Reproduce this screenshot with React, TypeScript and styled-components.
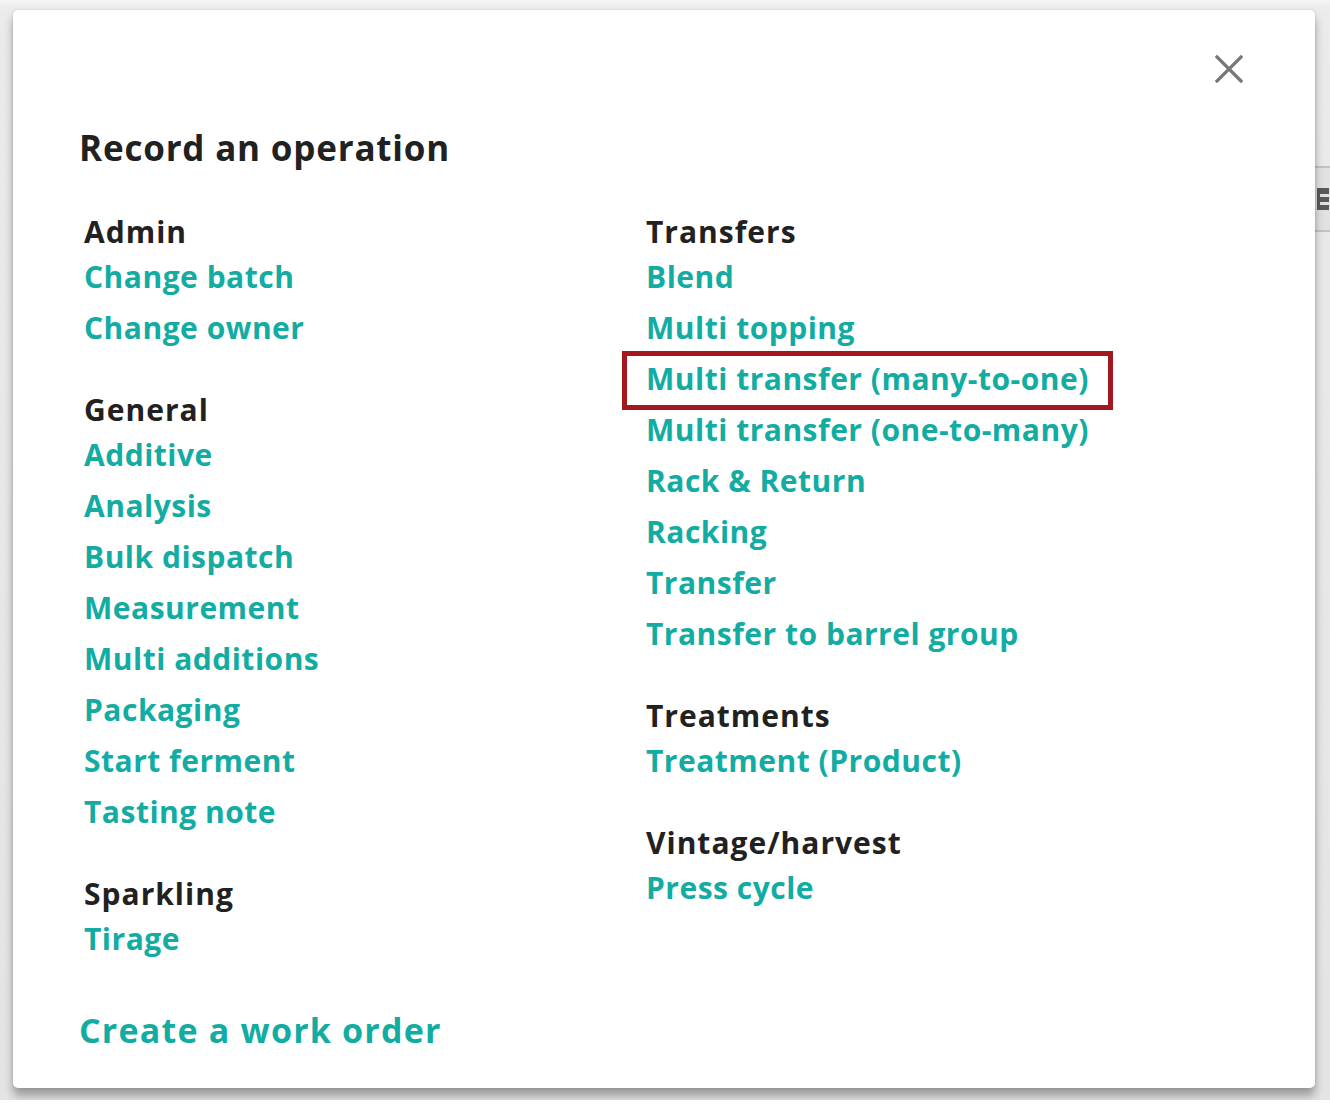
import React from 'react';
import styled, { createGlobalStyle } from 'styled-components';

const GlobalStyle = createGlobalStyle`
  html, body {
    margin: 0;
    padding: 0;
    background: #ffffff;
  }
  body {
    font-family: "Open Sans", "Noto Sans", "Liberation Sans", sans-serif;
  }
`;

const Backdrop = styled.div`
  display: flex;
  align-items: flex-start;
  height: 1100px;
  background: linear-gradient(#f5f5f5 0, #ebebeb 10px, #e4e4e4 100%);
  padding: 10px 0 0 13px;
  box-sizing: border-box;
`;

const Modal = styled.div`
  position: relative;
  flex: 0 0 1302px;
  height: 1078px;
  box-sizing: border-box;
  background: #ffffff;
  border-radius: 5px;
  box-shadow: 0 8px 10px rgba(0, 0, 0, 0.32), 0 0 3px rgba(0, 0, 0, 0.12);
  padding: 39px 66px 0 66px;
  display: flex;
  flex-direction: column;
`;

const SideStrip = styled.div`
  flex: 1;
  height: 100%;
  display: flex;
  flex-direction: column;
  padding-top: 156px;
  box-sizing: border-box;
`;

const SideTab = styled.div`
  height: 62px;
  border-top: 2px solid #c4c4c4;
  border-bottom: 2px solid #c4c4c4;
  background: #e2e2e2;
  display: flex;
  align-items: center;
  padding-left: 2px;
  overflow: hidden;
`;

const Header = styled.div`
  display: flex;
  justify-content: flex-end;
`;

const CloseButton = styled.button`
  width: 40px;
  height: 40px;
  border: none;
  background: transparent;
  padding: 0;
  display: flex;
  align-items: center;
  justify-content: center;
  cursor: pointer;
`;

const Title = styled.h1`
  margin: 37px 0 0 0;
  font-size: 35px;
  line-height: 44px;
  font-weight: 700;
  color: #212121;
  letter-spacing: 0.8px;
`;

const Columns = styled.div`
  display: grid;
  grid-template-columns: 562px 1fr;
  margin-top: 42px;
  padding-left: 5px;
`;

const Column = styled.div`
  display: flex;
  flex-direction: column;
  gap: 37px;
`;

const Section = styled.div`
  display: flex;
  flex-direction: column;
  align-items: flex-start;
`;

const SectionTitle = styled.div`
  font-size: 30px;
  line-height: 39px;
  font-weight: 700;
  color: #212121;
  letter-spacing: 1px;
`;

const OpLink = styled.a<{ $highlight?: boolean }>`
  position: relative;
  display: block;
  font-size: 30px;
  line-height: 51px;
  font-weight: 700;
  color: #12aca3;
  text-decoration: none;
  letter-spacing: 0.5px;
  cursor: pointer;
  ${p =>
    p.$highlight &&
    `
    &::after {
      content: '';
      position: absolute;
      left: -24px;
      right: -24px;
      top: -2px;
      bottom: -6px;
      border: 5px solid #a3181f;
    }
  `}
`;

const WorkOrder = styled.a`
  margin-top: 44px;
  font-size: 34px;
  line-height: 44px;
  font-weight: 700;
  color: #12aca3;
  letter-spacing: 1.2px;
  text-decoration: none;
  cursor: pointer;
`;

type Group = { title: string; items: string[] };

const leftGroups: Group[] = [
  { title: 'Admin', items: ['Change batch', 'Change owner'] },
  {
    title: 'General',
    items: [
      'Additive',
      'Analysis',
      'Bulk dispatch',
      'Measurement',
      'Multi additions',
      'Packaging',
      'Start ferment',
      'Tasting note',
    ],
  },
  { title: 'Sparkling', items: ['Tirage'] },
];

const rightGroups: Group[] = [
  {
    title: 'Transfers',
    items: [
      'Blend',
      'Multi topping',
      'Multi transfer (many-to-one)',
      'Multi transfer (one-to-many)',
      'Rack & Return',
      'Racking',
      'Transfer',
      'Transfer to barrel group',
    ],
  },
  { title: 'Treatments', items: ['Treatment (Product)'] },
  { title: 'Vintage/harvest', items: ['Press cycle'] },
];

const HIGHLIGHTED = 'Multi transfer (many-to-one)';

const GroupList: React.FC<{ groups: Group[] }> = ({ groups }) => (
  <Column>
    {groups.map(g => (
      <Section key={g.title}>
        <SectionTitle>{g.title}</SectionTitle>
        {g.items.map(item => (
          <OpLink key={item} $highlight={item === HIGHLIGHTED}>
            {item}
          </OpLink>
        ))}
      </Section>
    ))}
  </Column>
);

const App: React.FC = () => (
  <>
    <GlobalStyle />
    <Backdrop>
      <Modal>
        <Header>
          <CloseButton aria-label="Close">
            <svg width="28" height="28" viewBox="0 0 28 28">
              <path
                d="M2 2 L26 26 M26 2 L2 26"
                stroke="#777"
                strokeWidth="3.2"
                strokeLinecap="square"
              />
            </svg>
          </CloseButton>
        </Header>
        <Title>Record an operation</Title>
        <Columns>
          <GroupList groups={leftGroups} />
          <GroupList groups={rightGroups} />
        </Columns>
        <WorkOrder>Create a work order</WorkOrder>
      </Modal>
      <SideStrip>
        <SideTab>
          <svg width="12" height="22" viewBox="0 0 12 22">
            <rect x="0" y="0" width="12" height="22" fill="#5a5a5a" />
            <rect x="3" y="6" width="9" height="3" fill="#e2e2e2" />
            <rect x="3" y="14" width="9" height="3" fill="#e2e2e2" />
          </svg>
        </SideTab>
      </SideStrip>
    </Backdrop>
  </>
);

export default App;
